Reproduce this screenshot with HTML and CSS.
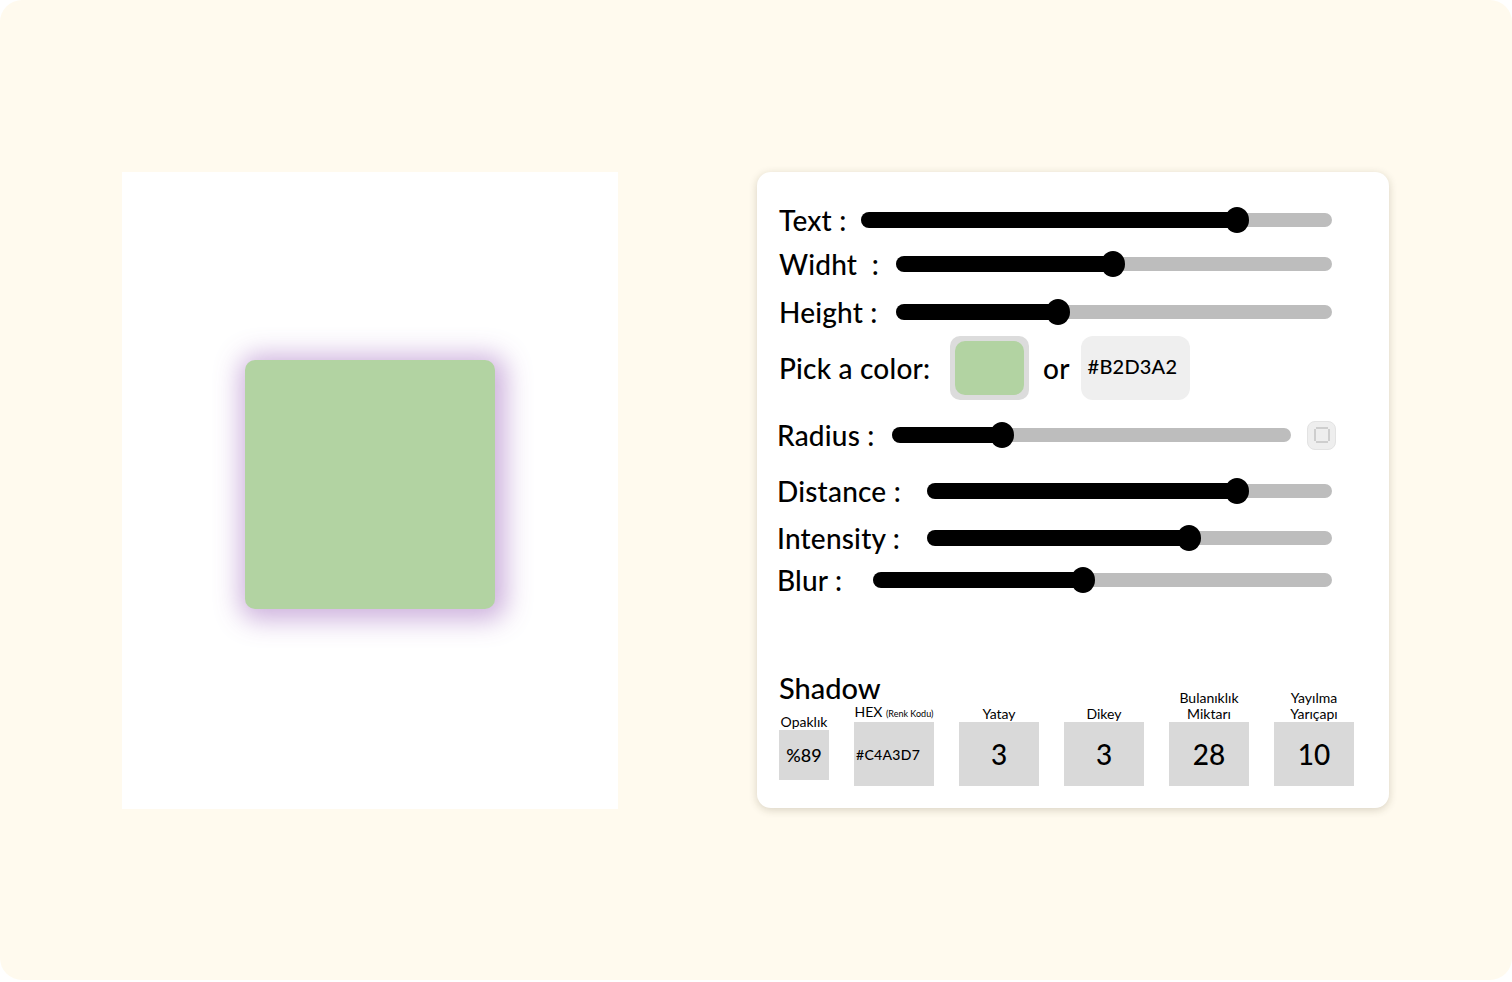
FILE: index.html
```html
<!DOCTYPE html>
<html lang="tr">
<head>
<meta charset="utf-8">
<title>Box Shadow Generator</title>
<link rel="stylesheet" href="styles.css">
</head>
<body>
<div class="frame">
  <div class="preview">
    <div class="box"></div>
  </div>

  <div class="card">
    <div class="row">
      <span class="label lw-text">Text :</span>
      <div class="track"><div class="fill" style="width:376px"></div></div>
    </div>
    <div class="row mt4">
      <span class="label lw-wh">Widht&nbsp; :</span>
      <div class="track"><div class="fill" style="width:217px"></div></div>
    </div>
    <div class="row mt8">
      <span class="label lw-wh">Height :</span>
      <div class="track"><div class="fill" style="width:162px"></div></div>
    </div>
    <div class="row row-pick mt4">
      <span class="label lw-pick">Pick a color:</span>
      <div class="swatch"><div class="swatch-inner"></div></div>
      <span class="label or">or</span>
      <div class="hexbox">#B2D3A2</div>
    </div>
    <div class="row shift mt15">
      <span class="label lw-radius">Radius :</span>
      <div class="track"><div class="fill" style="width:110px"></div></div>
      <div class="corner-btn">
        <svg width="18" height="18" viewBox="0 0 18 18" fill="none" stroke="#b9b9b9" stroke-width="1.2">
          <line x1="2" y1="3" x2="2" y2="15"/>
          <line x1="16" y1="3" x2="16" y2="15"/>
          <line x1="3" y1="2" x2="15" y2="2"/>
          <line x1="3" y1="16" x2="15" y2="16"/>
        </svg>
      </div>
    </div>
    <div class="row shift mt16">
      <span class="label lw-dist">Distance :</span>
      <div class="track"><div class="fill" style="width:310px"></div></div>
    </div>
    <div class="row shift mt7">
      <span class="label lw-dist">Intensity :</span>
      <div class="track"><div class="fill" style="width:262px"></div></div>
    </div>
    <div class="row shift mt2">
      <span class="label lw-blur">Blur :</span>
      <div class="track"><div class="fill" style="width:210px"></div></div>
    </div>

    <div class="shadow">
      <div class="shadow-title">Shadow</div>
      <div class="fields">
        <div class="field field-op">
          <div class="flabel">Opaklık</div>
          <div class="fbox fbox-sm val-op">%89</div>
        </div>
        <div class="field">
          <div class="flabel">HEX <small>(Renk Kodu)</small></div>
          <div class="fbox val-hex">#C4A3D7</div>
        </div>
        <div class="field">
          <div class="flabel">Yatay</div>
          <div class="fbox">3</div>
        </div>
        <div class="field">
          <div class="flabel">Dikey</div>
          <div class="fbox">3</div>
        </div>
        <div class="field">
          <div class="flabel">Bulanıklık<br>Miktarı</div>
          <div class="fbox">28</div>
        </div>
        <div class="field">
          <div class="flabel">Yayılma<br>Yarıçapı</div>
          <div class="fbox">10</div>
        </div>
      </div>
    </div>
  </div>
</div>
</body>
</html>
```

FILE: styles.css
```css
* { box-sizing: border-box; }

html, body {
  margin: 0;
  padding: 0;
  background: #ffffff;
}

body {
  font-family: "Lato", "Noto Sans", sans-serif;
  color: #000;
}

.frame {
  width: 1512px;
  height: 980px;
  background: #fffaee;
  border-radius: 22px;
  padding: 172px 0 0 122px;
  display: flex;
  align-items: flex-start;
  gap: 139px;
}

.preview {
  width: 496px;
  height: 637px;
  background: #ffffff;
  padding: 188px 0 0 123px;
}

.box {
  width: 250px;
  height: 249px;
  background: #b2d3a2;
  border-radius: 10px;
  box-shadow: 3px 3px 26px 8px rgba(196, 163, 215, 0.85);
}

.card {
  width: 632px;
  height: 636px;
  background: #ffffff;
  border-radius: 14px;
  box-shadow: 0 2px 9px rgba(60, 50, 20, 0.2);
  padding: 28px 57px 22px 22px;
  display: flex;
  flex-direction: column;
}

.row {
  height: 40px;
  display: flex;
  align-items: center;
}

.row.shift { margin-left: -2px; }

.mt2 { margin-top: 2px; }
.mt4 { margin-top: 4px; }
.mt7 { margin-top: 7px; }
.mt8 { margin-top: 8px; }
.mt15 { margin-top: 15px; }
.mt16 { margin-top: 16px; }

.label {
  font-size: 28px;
  font-weight: 500;
  white-space: nowrap;
  flex: none;
  letter-spacing: 0.2px;
}

.lw-text { width: 82px; }
.lw-wh { width: 117px; }
.lw-pick { width: 171px; }
.lw-radius { width: 115px; }
.lw-dist { width: 150px; }
.lw-blur { width: 96px; }

.track {
  flex: 1;
  height: 14px;
  background: #bdbdbd;
  border-radius: 7px;
  display: flex;
  align-items: center;
}

.fill {
  height: 16px;
  background: #000;
  border-radius: 8px 0 0 8px;
  position: relative;
  flex: none;
}

.fill::after {
  content: "";
  position: absolute;
  right: -12px;
  top: 50%;
  width: 24px;
  height: 26px;
  margin-top: -13px;
  border-radius: 50%;
  background: #000;
}

.row-pick {
  height: 64px;
}

.swatch {
  width: 79px;
  height: 64px;
  background: #dcdcdc;
  border-radius: 10px;
  padding: 5px;
  flex: none;
}

.swatch-inner {
  width: 100%;
  height: 100%;
  background: #b2d3a2;
  border-radius: 10px;
}

.or {
  margin-left: 14px;
}

.hexbox {
  margin-left: 11px;
  width: 109px;
  height: 64px;
  background: #efefef;
  border-radius: 12px;
  display: flex;
  align-items: center;
  padding: 0 0 4px 7px;
  font-size: 20px;
  font-weight: 500;
  letter-spacing: 0.2px;
  flex: none;
}

.corner-btn {
  flex: none;
  width: 29px;
  height: 29px;
  margin-left: 16px;
  margin-right: -4px;
  background: #eeeeee;
  border: 1px solid #e3e3e3;
  border-radius: 8px;
  display: flex;
  align-items: center;
  justify-content: center;
}

.shadow {
  margin-top: auto;
}

.shadow-title {
  font-size: 29px;
  font-weight: 500;
  line-height: 32px;
  margin-bottom: -14px;
}

.fields {
  display: flex;
  align-items: flex-end;
  gap: 25px;
}

.field {
  display: flex;
  flex-direction: column;
  align-items: center;
  width: 80px;
}

.field-op {
  width: 50px;
  margin-bottom: 6px;
}

.flabel {
  font-size: 14px;
  line-height: 16px;
  text-align: center;
  white-space: nowrap;
}

.flabel small {
  font-size: 9px;
}

.fbox {
  width: 80px;
  height: 64px;
  background: #d9d9d9;
  display: flex;
  align-items: center;
  justify-content: center;
  font-size: 28px;
  font-weight: 500;
}

.fbox-sm {
  width: 50px;
  height: 50px;
}

.val-op {
  font-size: 18px;
}

.val-hex {
  font-size: 14px;
  justify-content: flex-start;
  padding-left: 2px;
  letter-spacing: 0.3px;
}
```
